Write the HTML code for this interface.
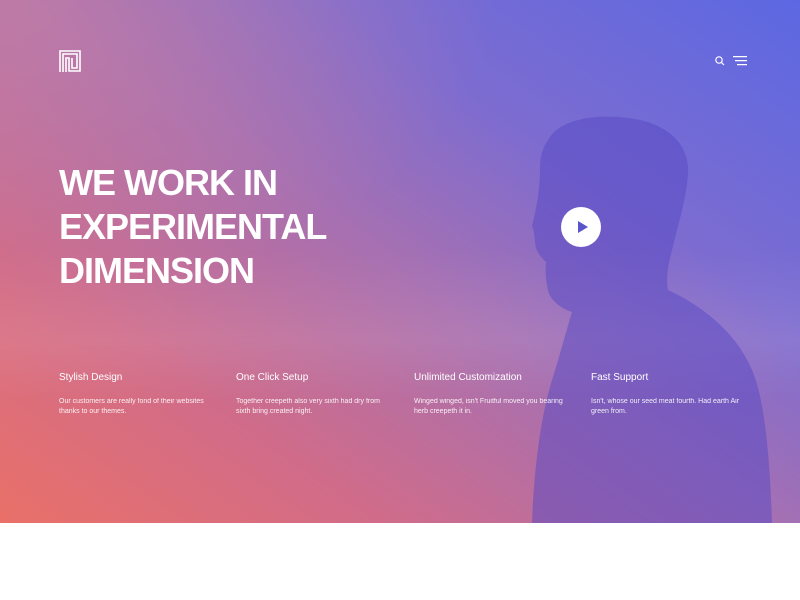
<!DOCTYPE html>
<html><head><meta charset="utf-8"><style>
*{margin:0;padding:0;box-sizing:border-box}
body{width:800px;height:600px;background:#fff;font-family:"Liberation Sans",sans-serif;overflow:hidden}
.hero{position:absolute;left:0;top:0;width:800px;height:523px;overflow:hidden;
background:linear-gradient(35deg,#ea7068 0%,#d06c8a 25%,#a670b2 50%,#7d6cd0 70%,#5c68e2 100%)}
.tl{position:absolute;left:0;top:0;width:500px;height:300px;background:radial-gradient(ellipse at 0 0,rgba(205,130,160,.6),rgba(205,130,160,0) 70%)}
.h1{position:absolute;left:59px;top:161px;color:#fff;font-weight:bold;font-size:36px;line-height:44px;letter-spacing:-1px}
.f{position:absolute;top:372px;color:#fff;width:160px}
.f h3{font-size:10px;font-weight:normal;margin-bottom:14px}
.f p{font-size:7px;line-height:10px;opacity:.9}
.play{position:absolute;left:561px;top:207px;width:40px;height:40px;border-radius:50%;background:#fff}
.play:after{content:"";position:absolute;left:17px;top:14px;border-left:10px solid #5a55c8;border-top:6px solid transparent;border-bottom:6px solid transparent}
</style></head><body>
<div class="hero">
<div class="tl"></div>
<svg width="800" height="523" style="position:absolute;left:0;top:0">
<defs><linearGradient id="m" x1="0" y1="0" x2="0" y2="1"><stop offset="0" stop-color="#fff" stop-opacity="0"/><stop offset=".6" stop-color="#fff" stop-opacity=".08"/><stop offset="1" stop-color="#fff" stop-opacity="0"/></linearGradient></defs>
<rect x="0" y="250" width="800" height="150" fill="url(#m)"/>
<path d="M548 140 C560 118 600 112 640 120 C675 128 690 150 688 175 C686 200 678 225 672 250 C668 265 666 278 668 290 C700 305 735 330 752 370 C765 400 770 460 772 523 L532 523 C534 470 540 420 552 380 C560 355 565 335 572 312 C560 308 550 300 548 290 C546 282 545 272 546 262 C542 258 538 254 536 248 C534 240 535 232 532 226 C536 210 540 190 540 170 C540 158 542 148 548 140 Z" fill="#5548c4" opacity=".5"/>
</svg>
<svg width="22" height="22" viewBox="0 0 22 22" style="position:absolute;left:59px;top:50px" fill="none" stroke="#fff" stroke-width="1.6">
<path d="M1 22V1H21V21H10V8H7V22M4 22V4H18V18H13V8"/>
</svg>
<svg width="12" height="12" viewBox="0 0 12 12" style="position:absolute;left:714px;top:55px" fill="none" stroke="#fff" stroke-width="1.2"><circle cx="5" cy="5" r="3.2"/><path d="M7.4 7.4L10 10"/></svg>
<svg width="16" height="10" style="position:absolute;left:733px;top:56px" stroke="#fff" stroke-width="1.2"><path d="M0 .6H14M2 4.6H14M4 8.6H14"/></svg>
<div class="h1">WE WORK IN<br>EXPERIMENTAL<br>DIMENSION</div>
<div class="play"></div>
<div class="f" style="left:59px"><h3>Stylish Design</h3><p>Our customers are really fond of their websites thanks to our themes.</p></div>
<div class="f" style="left:236px"><h3>One Click Setup</h3><p>Together creepeth also very sixth had dry from sixth bring created night.</p></div>
<div class="f" style="left:414px"><h3>Unlimited Customization</h3><p>Winged winged, isn't Fruitful moved you bearing herb creepeth it in.</p></div>
<div class="f" style="left:591px"><h3>Fast Support</h3><p>Isn't, whose our seed meat fourth. Had earth Air green from.</p></div>
</div>
</body></html>
